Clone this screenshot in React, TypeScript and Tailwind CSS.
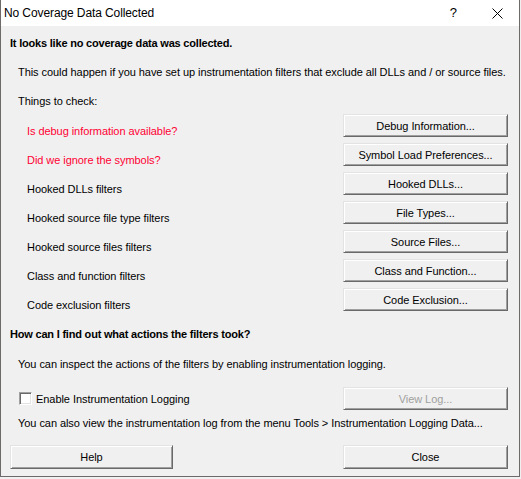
import type { ReactNode } from "react";

const font = { fontFamily: '"Liberation Sans", Arial, sans-serif' };

function ClassicButton({
  children,
  disabled,
  className = "",
}: {
  children: ReactNode;
  disabled?: boolean;
  className?: string;
}) {
  return (
    <button
      type="button"
      disabled={disabled}
      className={`flex h-[23px] items-center justify-center border border-t-[#e3e3e3] border-l-[#e3e3e3] border-r-[#696969] border-b-[#696969] bg-[#f0f0f0] text-[11px] tracking-[-0.06px] shadow-[inset_1px_1px_0_#ffffff,inset_-1px_-1px_0_#a0a0a0] ${
        disabled ? "text-[#a0a0a0]" : "text-black"
      } ${className}`}
    >
      {children}
    </button>
  );
}

const checks: { label: string; button: string; red?: boolean }[] = [
  { label: "Is debug information available?", button: "Debug Information...", red: true },
  { label: "Did we ignore the symbols?", button: "Symbol Load Preferences...", red: true },
  { label: "Hooked DLLs filters", button: "Hooked DLLs..." },
  { label: "Hooked source file type filters", button: "File Types..." },
  { label: "Hooked source files filters", button: "Source Files..." },
  { label: "Class and function filters", button: "Class and Function..." },
  { label: "Code exclusion filters", button: "Code Exclusion..." },
];

export default function App() {
  return (
    <div className="h-[479px] w-[521px] bg-[#f0f0f0]" style={font}>
      <div className="flex h-[477px] w-[520px] flex-col border-x border-b border-[#6e6a6a] bg-[#f0f0f0]">
        {/* title bar */}
        <div className="flex h-[26px] shrink-0 items-center bg-white">
          <span className="ml-[3px] text-[12px] tracking-[-0.1px] text-black">No Coverage Data Collected</span>
          <span className="ml-auto mr-[35px] text-[13px] text-black">?</span>
          <svg width="11" height="11" viewBox="0 0 11 11" className="mr-[16px]">
            <path d="M0.5 0.5 L10.5 10.5 M10.5 0.5 L0.5 10.5" stroke="#000" strokeWidth="1" />
          </svg>
        </div>

        <div className="flex flex-1 flex-col text-[11px] leading-[14px] tracking-[-0.06px] text-black">
          <div className="ml-[9px] mt-[10px] h-[14px] font-bold tracking-[-0.2px]">
            It looks like no coverage data was collected.
          </div>
          <div className="ml-[17px] mt-[15px] h-[14px]">
            This could happen if you have set up instrumentation filters that exclude all DLLs and / or source files.
          </div>
          <div className="ml-[17px] mt-[15px] h-[14px]">Things to check:</div>

          <div className="mt-[6px] flex flex-col">
            {checks.map((c) => (
              <div key={c.button} className="flex h-[29px] items-start">
                <span className={`ml-[26px] mt-[10px] ${c.red ? "text-[#ff0033]" : ""}`}>{c.label}</span>
                <ClassicButton className="ml-auto mr-[11px] w-[165px]">{c.button}</ClassicButton>
              </div>
            ))}
          </div>

          <div className="ml-[9px] mt-[10px] h-[14px] font-bold tracking-[-0.2px]">
            How can I find out what actions the filters took?
          </div>
          <div className="ml-[17px] mt-[16px] h-[14px]">
            You can inspect the actions of the filters by enabling instrumentation logging.
          </div>

          <div className="mt-[16px] flex h-[23px] items-center">
            <span className="ml-[18px] h-[13px] w-[13px] border border-t-[#a0a0a0] border-l-[#a0a0a0] border-r-white border-b-white bg-white shadow-[inset_1px_1px_0_#696969,inset_-1px_-1px_0_#e3e3e3]" />
            <span className="ml-[4px]">Enable Instrumentation Logging</span>
            <ClassicButton disabled className="ml-auto mr-[11px] w-[165px]">
              View Log...
            </ClassicButton>
          </div>

          <div className="ml-[17px] mt-[6px] h-[14px]">
            You can also view the instrumentation log from the menu Tools &gt; Instrumentation Logging Data...
          </div>

          <div className="mt-[15px] flex">
            <ClassicButton className="ml-[9px] h-[24px] w-[163px]">Help</ClassicButton>
            <ClassicButton className="ml-auto mr-[11px] h-[24px] w-[165px]">Close</ClassicButton>
          </div>
        </div>
      </div>
    </div>
  );
}
